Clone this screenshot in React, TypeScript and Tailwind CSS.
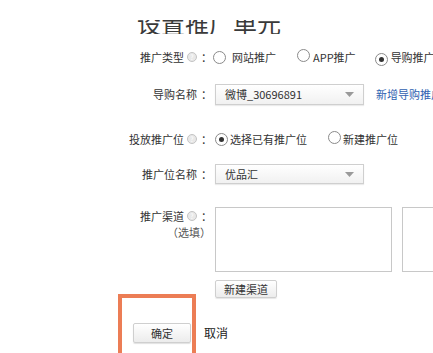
import React from "react";

const font = {
  fontFamily: '"Noto Sans CJK SC", "Noto Sans", "Liberation Sans", sans-serif',
};

function Help() {
  return (
    <span className="ml-[3px] inline-flex h-[10px] w-[10px] items-center justify-center rounded-full border border-[#c4c4c4] bg-[#e8e8e8] text-[7px] leading-none text-white">
      ?
    </span>
  );
}

function Radio({ checked }: { checked?: boolean }) {
  return (
    <span className="inline-flex h-[13px] w-[13px] shrink-0 items-center justify-center rounded-full border border-[#8a8a8a] bg-white">
      {checked ? <span className="h-[5px] w-[5px] rounded-full bg-[#333]" /> : null}
    </span>
  );
}

function Select({ text }: { text: string }) {
  return (
    <div className="flex h-full w-[149px] items-center justify-between border border-[#cfcfcf] bg-gradient-to-b from-white to-[#f1f1f1] pl-[9px] pr-[9px] shadow-[0_1px_1px_rgba(0,0,0,0.08)]">
      <span className="text-[11px] text-[#333]">{text}</span>
      <svg width="9" height="5" viewBox="0 0 9 5">
        <path d="M0 0 L9 0 L4.5 5 Z" fill="#9a9a9a" />
      </svg>
    </div>
  );
}

function Colon() {
  return <span className="ml-[4px] w-[10px] overflow-visible text-left">：</span>;
}

function Label({ children }: { children: React.ReactNode }) {
  return (
    <div className="flex w-[211px] shrink-0 items-center justify-end text-[11px] text-[#333]">
      {children}
      <Colon />
    </div>
  );
}

export default function App() {
  return (
    <div className="relative h-[353px] w-[433px] overflow-hidden bg-white" style={font}>
      <div className="pt-[20px]">
        <div className="h-[14px] overflow-hidden pl-[137px]">
          <div className="-mt-[9px] whitespace-nowrap text-[24px] leading-[24px] text-[#3a3a3a]">
            设置推广单元
          </div>
        </div>
      </div>

      {/* Row 1 */}
      <div className="mt-[13px] flex h-[20px] items-center whitespace-nowrap">
        <Label>
          推广类型
          <Help />
        </Label>
        <div className="ml-[2px] flex items-center text-[11px] text-[#333]">
          <Radio />
          <span className="ml-[6px]">网站推广</span>
          <span className="ml-[21px]">
            <Radio />
          </span>
          <span className="ml-[3px]">APP推广</span>
          <span className="ml-[19px]">
            <Radio checked />
          </span>
          <span className="ml-[3px]">导购推广</span>
        </div>
      </div>

      {/* Row 2 */}
      <div className="mt-[17px] flex h-[21px] items-center whitespace-nowrap">
        <Label>导购名称</Label>
        <div className="ml-[4px] flex h-full items-center">
          <Select text="微博_30696891" />
          <span className="ml-[12px] text-[11px] text-[#2f5fb0]">新增导购推广位</span>
        </div>
      </div>

      {/* Row 3 */}
      <div className="mt-[24px] flex h-[20px] items-center whitespace-nowrap">
        <Label>
          投放推广位
          <Help />
        </Label>
        <div className="ml-[4px] flex items-center text-[11px] text-[#333]">
          <Radio checked />
          <span className="ml-[2px]">选择已有推广位</span>
          <span className="ml-[21px]">
            <Radio />
          </span>
          <span className="ml-[2px]">新建推广位</span>
        </div>
      </div>

      {/* Row 4 */}
      <div className="mt-[15px] flex h-[20px] items-center whitespace-nowrap">
        <Label>推广位名称</Label>
        <div className="ml-[4px] flex h-full items-center">
          <Select text="优品汇" />
        </div>
      </div>

      {/* Row 5 */}
      <div className="mt-[23px] flex whitespace-nowrap">
        <div className="flex w-[211px] shrink-0 flex-col items-end text-[11px] text-[#333]">
          <div className="mt-[2px] flex h-[14px] items-center">
            推广渠道
            <Help />
            <Colon />
          </div>
          <div className="mt-[2px] flex h-[14px] items-center text-[#555]">（选填）</div>
        </div>
        <div className="ml-[4px] flex">
          <div className="h-[65px] w-[177px] border border-[#c8c8c8] bg-white" />
          <div className="ml-[10px] h-[65px] w-[60px] border border-[#c8c8c8] bg-white" />
        </div>
      </div>

      {/* Row 6 */}
      <div className="mt-[8px] pl-[215px]">
        <button className="flex h-[18px] w-[62px] items-center justify-center rounded-[2px] border border-[#cfcfcf] bg-gradient-to-b from-white to-[#ececec] text-[11px] text-[#333] shadow-[0_1px_1px_rgba(0,0,0,0.1)]">
          新建渠道
        </button>
      </div>

      {/* Row 7 */}
      <div className="mt-[25px] flex items-center whitespace-nowrap pl-[133px]">
        <button className="flex h-[20px] w-[58px] items-center justify-center rounded-[2px] border border-[#cfcfcf] bg-gradient-to-b from-white to-[#ececec] text-[11px] text-[#333] shadow-[0_1px_1px_rgba(0,0,0,0.12)]">
          确定
        </button>
        <span className="ml-[13px] text-[12px] text-[#222]">取消</span>
      </div>

      <div className="absolute left-[118px] top-[294px] h-[70px] w-[78px] border-[4px] border-[#ec7d55]" />
    </div>
  );
}
